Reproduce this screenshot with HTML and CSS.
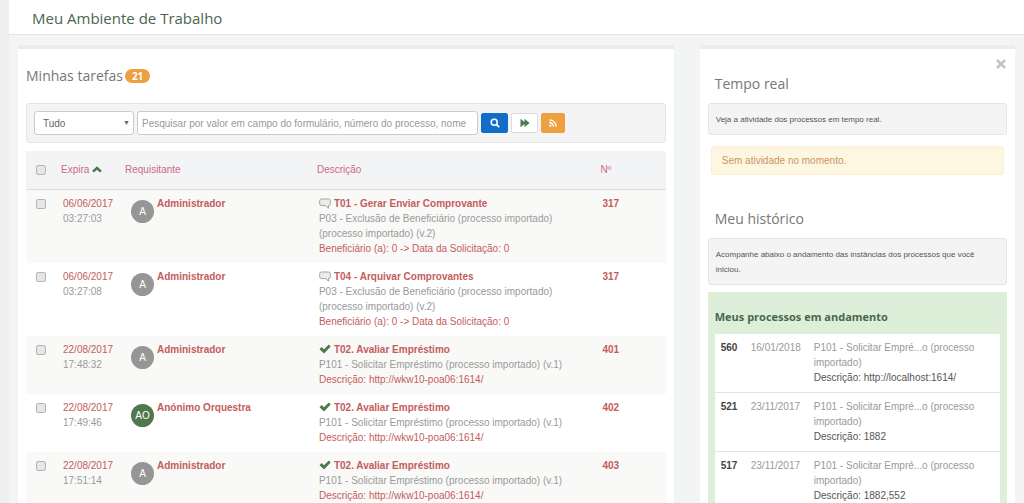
FILE: index.html
```html
<!DOCTYPE html>
<html lang="pt-BR">
<head>
  <meta charset="UTF-8" />
  <meta name="viewport" content="width=device-width, initial-scale=1.0" />
  <title>Meu Ambiente de Trabalho</title>
  <link rel="stylesheet" href="styles.css">
</head>
<body>
  <svg class="sprite" aria-hidden="true">
    <symbol id="icon-comment" viewBox="0 0 12 11">
      <path d="M2.5 1h7A1.8 1.8 0 0 1 11.300 2.800v3A1.800 1.800 0 0 1 9.500 7.600L9.500 10.200 6.600 7.600H2.500A1.800 1.800 0 0 1 .7 5.800v-3A1.800 1.800 0 0 1 2.500 1z" fill="#ececec" stroke="#a3a3a3" />
    </symbol>
    <symbol id="icon-check" viewBox="0 0 12 10">
      <path d="M.5 5.200 2.600 3.100 5 5.200 9.800.6 11.700 2.600 5 9.500z" fill="#4b7a4b" />
    </symbol>
  </svg>

  <header class="page-header">
    <h1>Meu Ambiente de Trabalho</h1>
  </header>

  <div class="container">
    <main class="panel tasks">
      <h2>Minhas tarefas <span class="badge">21</span></h2>

      <form class="well search">
        <div class="select">
          <select aria-label="Filtro">
            <option>Tudo</option>
          </select>
        </div>
        <input type="text" aria-label="Pesquisar" placeholder="Pesquisar por valor em campo do formulário, número do processo, nome" />
        <button type="button" class="btn btn-primary" aria-label="Pesquisar">
          <svg width="10" height="10" viewBox="0 0 10 10"><circle cx="4.200" cy="4.200" r="3" fill="none" stroke="#fff" stroke-width="1.500" /><path d="M6.300 6.300 9.200 9.200" stroke="#fff" stroke-width="1.800" /></svg>
        </button>
        <button type="button" class="btn" aria-label="Avançar">
          <svg width="10" height="10" viewBox="0 0 10 10"><path d="M.5.800 4.500 4V.800L9.500 5 4.500 9.200V6L.5 9.200z" fill="#4b7a4b" /></svg>
        </button>
        <button type="button" class="btn btn-warning" aria-label="RSS">
          <svg width="8" height="8" viewBox="0 0 8 8"><circle cx="1.300" cy="6.700" r="1.100" fill="#fff" /><path d="M.2 3.500a4.300 4.300 0 0 1 4.300 4.300M.2.800a7 7 0 0 1 7 7" fill="none" stroke="#fff" stroke-width="1.300" /></svg>
        </button>
      </form>

      <table class="task-table">
        <colgroup>
          <col class="col-check" />
          <col class="col-date" />
          <col class="col-user" />
          <col class="col-desc" />
          <col />
        </colgroup>
        <thead>
          <tr>
            <th><input type="checkbox" aria-label="Selecionar todas" /></th>
            <th>Expira <svg width="10" height="7" viewBox="0 0 10 7"><path d="M1 5.600 5 2 9 5.600" fill="none" stroke="#4b7a4b" stroke-width="2.500" /></svg></th>
            <th>Requisitante</th>
            <th>Descrição</th>
            <th>Nº</th>
          </tr>
        </thead>
        <tbody>
          <tr>
            <td><input type="checkbox" aria-label="Selecionar T01" /></td>
            <td><a href="#">06/06/2017</a><small>03:27:03</small></td>
            <td><div class="user"><span class="avatar">A</span><a href="#">Administrador</a></div></td>
            <td>
              <a href="#" class="task"><svg width="12" height="11"><use href="#icon-comment" /></svg>T01 - Gerar Enviar Comprovante</a>
              <small>P03 - Exclusão de Beneficiário (processo importado) (processo importado) (v.2)</small>
              <a href="#">Beneficiário (a): 0 -&gt; Data da Solicitação: 0</a>
            </td>
            <td><a href="#" class="number">317</a></td>
          </tr>
          <tr>
            <td><input type="checkbox" aria-label="Selecionar T04" /></td>
            <td><a href="#">06/06/2017</a><small>03:27:08</small></td>
            <td><div class="user"><span class="avatar">A</span><a href="#">Administrador</a></div></td>
            <td>
              <a href="#" class="task"><svg width="12" height="11"><use href="#icon-comment" /></svg>T04 - Arquivar Comprovantes</a>
              <small>P03 - Exclusão de Beneficiário (processo importado) (processo importado) (v.2)</small>
              <a href="#">Beneficiário (a): 0 -&gt; Data da Solicitação: 0</a>
            </td>
            <td><a href="#" class="number">317</a></td>
          </tr>
          <tr>
            <td><input type="checkbox" aria-label="Selecionar 401" /></td>
            <td><a href="#">22/08/2017</a><small>17:48:32</small></td>
            <td><div class="user"><span class="avatar">A</span><a href="#">Administrador</a></div></td>
            <td>
              <a href="#" class="task"><svg width="12" height="10"><use href="#icon-check" /></svg>T02. Avaliar Empréstimo</a>
              <small>P101 - Solicitar Empréstimo (processo importado) (v.1)</small>
              <a href="#">Descrição: http://wkw10-poa06:1614/</a>
            </td>
            <td><a href="#" class="number">401</a></td>
          </tr>
          <tr>
            <td><input type="checkbox" aria-label="Selecionar 402" /></td>
            <td><a href="#">22/08/2017</a><small>17:49:46</small></td>
            <td><div class="user"><span class="avatar avatar-green">AO</span><a href="#">Anónimo Orquestra</a></div></td>
            <td>
              <a href="#" class="task"><svg width="12" height="10"><use href="#icon-check" /></svg>T02. Avaliar Empréstimo</a>
              <small>P101 - Solicitar Empréstimo (processo importado) (v.1)</small>
              <a href="#">Descrição: http://wkw10-poa06:1614/</a>
            </td>
            <td><a href="#" class="number">402</a></td>
          </tr>
          <tr>
            <td><input type="checkbox" aria-label="Selecionar 403" /></td>
            <td><a href="#">22/08/2017</a><small>17:51:14</small></td>
            <td><div class="user"><span class="avatar">A</span><a href="#">Administrador</a></div></td>
            <td>
              <a href="#" class="task"><svg width="12" height="10"><use href="#icon-check" /></svg>T02. Avaliar Empréstimo</a>
              <small>P101 - Solicitar Empréstimo (processo importado) (v.1)</small>
              <a href="#">Descrição: http://wkw10-poa06:1614/</a>
            </td>
            <td><a href="#" class="number">403</a></td>
          </tr>
        </tbody>
      </table>
    </main>

    <aside class="panel sidebar">
      <button type="button" class="close" aria-label="Fechar">
        <svg width="10" height="10" viewBox="0 0 10 10"><path d="M1 1 9 9M9 1 1 9" stroke="#c4c4c8" stroke-width="2.500" /></svg>
      </button>
      <section>
        <h2>Tempo real</h2>
        <p class="well">Veja a atividade dos processos em tempo real.</p>
        <p class="alert">Sem atividade no momento.</p>
      </section>
      <section>
        <h2>Meu histórico</h2>
        <p class="well">Acompanhe abaixo o andamento das instâncias dos processos que você iniciou.</p>
        <div class="history">
          <h3>Meus processos em andamento</h3>
          <table>
            <tr>
              <th scope="row">560</th>
              <td>16/01/2018</td>
              <td>P101 - Solicitar Empré...o (processo importado)<span>Descrição: http://localhost:1614/</span></td>
            </tr>
            <tr>
              <th scope="row">521</th>
              <td>23/11/2017</td>
              <td>P101 - Solicitar Empré...o (processo importado)<span>Descrição: 1882</span></td>
            </tr>
            <tr>
              <th scope="row">517</th>
              <td>23/11/2017</td>
              <td>P101 - Solicitar Empré...o (processo importado)<span>Descrição: 1882,552</span></td>
            </tr>
          </table>
        </div>
      </section>
    </aside>
  </div>
</body>
</html>
```
FILE: styles.css
```css
:root {
  --bg-color: #f3f4f4;
  --card-bg: #fff;
  --link-color: #c45c5c;
  --muted-color: #999;
  --green: #4b7a4b;
  --border-color: #e5e5e5;
}
* {
  margin: 0;
  padding: 0;
  box-sizing: border-box;
}
body {
  min-height: 100vh;
  border-left: 9px solid #efefef;
  background: var(--bg-color);
  color: #555;
  font-family: "Liberation Sans", Arial, sans-serif;
  font-size: 10px;
  line-height: 15px;
}
a {
  color: var(--link-color);
  text-decoration: none;
}
h1, h2, h3 {
  font-family: "Open Sans", sans-serif;
  font-weight: 400;
}
.sprite {
  display: none;
}
.page-header {
  padding: 8px 23px 6px;
  background: var(--card-bg);
  border-bottom: 1px solid var(--border-color);
}
.page-header h1 {
  color: #4a6650;
  font-size: 15px;
  line-height: 20px;
}
.container {
  display: grid;
  grid-template-columns: 2.08fr 1fr;
  gap: 26px;
  padding: 10px 9px 0;
}
.panel {
  padding: 0 8px 12px;
  background: var(--card-bg);
  border-top: 4px solid #ececec;
}
.panel h2 {
  color: #777;
  font-size: 14px;
  line-height: 20px;
}
.tasks h2 {
  display: flex;
  align-items: center;
  gap: 2px;
  padding: 17px 0;
}
.badge {
  padding: 0 7px;
  border-radius: 8px;
  background: #eea040;
  color: #fff;
  font-size: 10px;
  font-weight: 700;
  line-height: 14px;
}
.well {
  background: #f4f4f4;
  border: 1px solid var(--border-color);
  border-radius: 3px;
}

/* search bar */
.search {
  display: flex;
  align-items: center;
  gap: 3px;
  margin-bottom: 8px;
  padding: 7px;
}
.select {
  position: relative;
  width: 100px;
}
.select::after {
  content: "▼";
  position: absolute;
  top: 4px;
  right: 4px;
  color: var(--green);
  font-size: 7px;
  pointer-events: none;
}
.search select, .search input {
  width: 100%;
  height: 24px;
  padding: 0 8px;
  border: 1px solid #ccc;
  border-radius: 3px;
  background: #fff;
  color: #666;
  font: inherit;
  appearance: none;
}
.search input {
  width: 341px;
  padding: 0 4px;
}
.search input::placeholder {
  color: var(--muted-color);
}
.btn {
  display: flex;
  align-items: center;
  justify-content: center;
  width: 27px;
  height: 20px;
  border: 1px solid #ddd;
  border-radius: 2px;
  background: #fff;
}
.btn-primary {
  background: #116dc8;
  border-color: #116dc8;
}
.btn-warning {
  width: 24px;
  background: #eea040;
  border-color: #eea040;
}

/* tasks */
.task-table {
  width: 100%;
  border-collapse: collapse;
  table-layout: fixed;
}
.col-check {
  width: 30px;
}
.col-date {
  width: 64px;
}
.col-user {
  width: 30%;
}
.col-desc {
  width: 44%;
}
.task-table th {
  height: 38px;
  padding: 0 5px;
  background: #f3f4f5;
  border-bottom: 1px solid #ddd;
  color: #d06a80;
  font-weight: 400;
  text-align: left;
}
.task-table td {
  padding: 6px 0 7px 7px;
  vertical-align: top;
}
.task-table tbody tr:nth-child(odd) {
  background: #f9f9f8;
}
.task-table th:first-child, .task-table td:first-child {
  padding-left: 10px;
}
.task-table th:last-child {
  padding-left: 7px;
}
.task-table td:last-child {
  padding-left: 9px;
}
.task-table td small, .task-table td a {
  display: block;
  font-size: 10px;
}
.task-table small {
  color: var(--muted-color);
}
.task-table input {
  display: block;
  width: 10px;
  height: 10px;
  border: 1px solid #b5b5b5;
  border-radius: 2px;
  background: #e6e6e6;
  appearance: none;
}
.task-table td input {
  margin-top: 3px;
}
.user {
  display: flex;
  gap: 3px;
  padding-left: 4px;
  font-weight: 700;
}
.avatar {
  width: 23px;
  height: 23px;
  margin-top: 4px;
  border-radius: 50%;
  background: #969696;
  color: #fff;
  font-weight: 400;
  line-height: 23px;
  text-align: center;
}
.avatar-green {
  background: #52774f;
}
.task-table td .task {
  display: flex;
  align-items: center;
  gap: 3px;
  font-weight: 700;
}
.number {
  font-weight: 700;
}

/* sidebar */
.close {
  position: absolute;
  top: 10px;
  right: 9px;
  border: 0;
  background: none;
  line-height: 0;
}
.sidebar {
  position: relative;
}
.sidebar h2 {
  padding: 25px 7px 9px;
}
.sidebar .well {
  padding: 8px 7px 7px;
  font-size: 8px;
}
.sidebar .alert {
  margin: 11px 3px 9px;
  padding: 6px 10px;
  background: #fdf6e0;
  border: 1px solid #fbeed5;
  border-radius: 3px;
  color: #cc9468;
}
.history {
  margin-top: 7px;
  padding: 15px 7px 7px;
  background: #ddefd8;
}
.history h3 {
  margin-bottom: 7px;
  color: #4a6650;
  font-size: 11px;
  font-weight: 700;
  line-height: 20px;
}
.history table {
  width: 100%;
  background: #fff;
  border-collapse: collapse;
}
.history tr {
  border-bottom: 1px solid var(--border-color);
}
.history th, .history td {
  padding: 6px 6px 7px;
  color: var(--muted-color);
  text-align: left;
  vertical-align: top;
}
.history th {
  width: 30px;
  color: #444;
}
.history td:nth-child(2) {
  width: 63px;
}
.history span {
  display: block;
  color: #555;
}
```
